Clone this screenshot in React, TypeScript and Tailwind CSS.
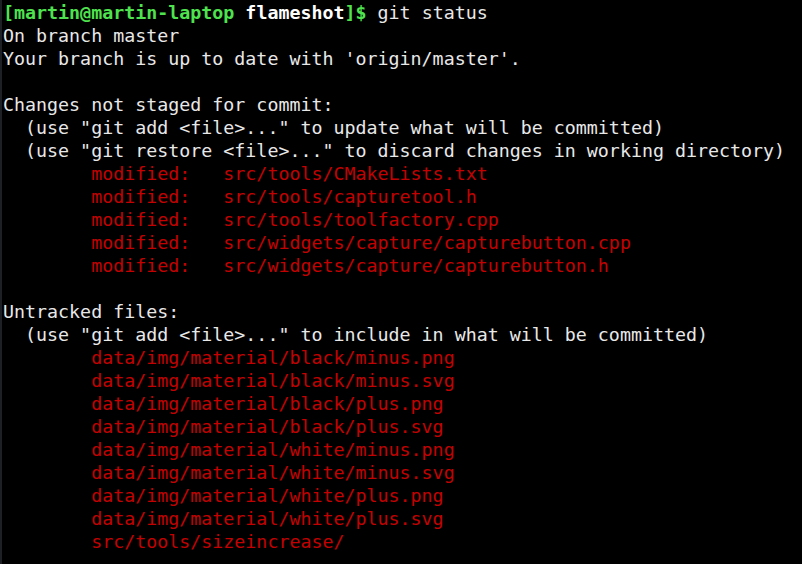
const lines: { text: string; color: "white" | "red" }[] = [
  { text: "On branch master", color: "white" },
  { text: "Your branch is up to date with 'origin/master'.", color: "white" },
  { text: "", color: "white" },
  { text: "Changes not staged for commit:", color: "white" },
  { text: '  (use "git add <file>..." to update what will be committed)', color: "white" },
  { text: '  (use "git restore <file>..." to discard changes in working directory)', color: "white" },
  { text: "        modified:   src/tools/CMakeLists.txt", color: "red" },
  { text: "        modified:   src/tools/capturetool.h", color: "red" },
  { text: "        modified:   src/tools/toolfactory.cpp", color: "red" },
  { text: "        modified:   src/widgets/capture/capturebutton.cpp", color: "red" },
  { text: "        modified:   src/widgets/capture/capturebutton.h", color: "red" },
  { text: "", color: "white" },
  { text: "Untracked files:", color: "white" },
  { text: '  (use "git add <file>..." to include in what will be committed)', color: "white" },
  { text: "        data/img/material/black/minus.png", color: "red" },
  { text: "        data/img/material/black/minus.svg", color: "red" },
  { text: "        data/img/material/black/plus.png", color: "red" },
  { text: "        data/img/material/black/plus.svg", color: "red" },
  { text: "        data/img/material/white/minus.png", color: "red" },
  { text: "        data/img/material/white/minus.svg", color: "red" },
  { text: "        data/img/material/white/plus.png", color: "red" },
  { text: "        data/img/material/white/plus.svg", color: "red" },
  { text: "        src/tools/sizeincrease/", color: "red" },
];

export default function App() {
  return (
    <div className="w-[802px] h-[564px] overflow-hidden bg-black border-l-2 border-[#1d2125] pl-[1px] pt-[1px] font-['DejaVu_Sans_Mono',monospace] text-[18.31px] leading-[23px] text-[#e8e8e8] whitespace-pre">
      <div>
        <span className="font-bold text-[#4fe24f]">[martin@martin-laptop </span>
        <span className="font-bold text-white">flameshot</span>
        <span className="font-bold text-[#4fe24f]">]$</span>
        <span> git status</span>
      </div>
      {lines.map((line, i) => (
        <div key={i} className={line.color === "red" ? "text-[#c40000]" : ""}>
          {line.text || "\u00a0"}
        </div>
      ))}
    </div>
  );
}
